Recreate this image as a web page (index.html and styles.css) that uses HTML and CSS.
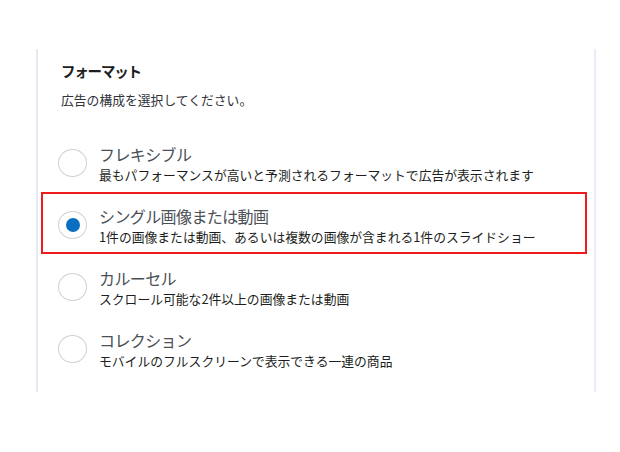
FILE: index.html
```html
<!DOCTYPE html>
<html lang="ja">
<head>
<meta charset="utf-8">
<link rel="stylesheet" href="styles.css">
</head>
<body>
<div class="panel">
  <div class="title">フォーマット</div>
  <div class="subtitle">広告の構成を選択してください。</div>
  <div class="options">
    <div class="option">
      <span class="radio"></span>
      <div class="text">
        <div class="label">フレキシブル</div>
        <div class="desc">最もパフォーマンスが高いと予測されるフォーマットで広告が表示されます</div>
      </div>
    </div>
    <div class="option selected">
      <span class="radio checked"></span>
      <div class="text">
        <div class="label">シングル画像または動画</div>
        <div class="desc">1件の画像または動画、あるいは複数の画像が含まれる1件のスライドショー</div>
      </div>
    </div>
    <div class="option">
      <span class="radio"></span>
      <div class="text">
        <div class="label">カルーセル</div>
        <div class="desc">スクロール可能な2件以上の画像または動画</div>
      </div>
    </div>
    <div class="option">
      <span class="radio"></span>
      <div class="text">
        <div class="label">コレクション</div>
        <div class="desc">モバイルのフルスクリーンで表示できる一連の商品</div>
      </div>
    </div>
  </div>
</div>
</body>
</html>
```
FILE: styles.css
```css
html, body {
  margin: 0;
  padding: 0;
  background: #ffffff;
}
body {
  font-family: "Noto Sans CJK JP", "Noto Sans", sans-serif;
  color: #1c1e21;
}
.panel {
  margin: 49px 0 0 36px;
  width: 560px;
  height: 343px;
  border-left: 2px solid #e4e9f2;
  border-right: 2px solid #e9eef6;
  padding: 12px 0 0 23px;
  box-sizing: border-box;
}
.title {
  font-size: 14.5px;
  font-weight: 700;
  letter-spacing: -1.2px;
  line-height: 20px;
  color: #1c1e21;
}
.subtitle {
  margin-top: 10px;
  font-size: 12.8px;
  line-height: 18px;
  color: #303338;
}
.options {
  margin-top: 21px;
  margin-left: -20px;
  width: 546px;
  display: flex;
  flex-direction: column;
}
.option {
  height: 62px;
  box-sizing: border-box;
  border: 2px solid transparent;
  display: flex;
  align-items: center;
  padding: 4px 0 0 15px;
  gap: 12px;
}
.option.selected {
  border-color: #ee1c1c;
}
.radio {
  flex: none;
  width: 29px;
  height: 28px;
  border-radius: 50%;
  border: 1.5px solid #cdd1d7;
  box-sizing: border-box;
  display: flex;
  align-items: center;
  justify-content: center;
  background: #fff;
}
.radio.checked::after {
  content: "";
  width: 14px;
  height: 14px;
  border-radius: 50%;
  background: #0b6fc1;
}
.label {
  font-size: 16px;
  line-height: 22px;
  color: #4b4f56;
  letter-spacing: -0.6px;
}
.desc {
  font-size: 12.8px;
  line-height: 18px;
  color: #1c1e21;
  margin-top: 1px;
}
```
